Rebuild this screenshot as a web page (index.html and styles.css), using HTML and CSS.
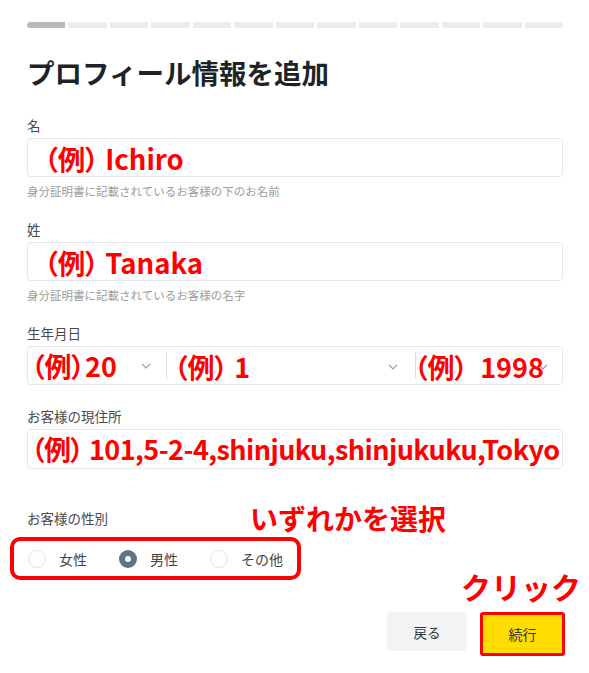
FILE: index.html
```html
<!DOCTYPE html>
<html lang="ja">
<head>
<meta charset="utf-8">
<title>プロフィール情報を追加</title>
<link rel="stylesheet" href="styles.css">
</head>
<body>
<div class="page">
  <div class="progress">
    <span class="seg seg-done"></span><span class="seg"></span><span class="seg"></span><span class="seg"></span><span class="seg"></span><span class="seg"></span><span class="seg"></span><span class="seg"></span><span class="seg"></span><span class="seg"></span><span class="seg"></span><span class="seg"></span><span class="seg"></span>
  </div>

  <h1 class="title">プロフィール情報を追加</h1>

  <div class="field field-first">
    <div class="label">名</div>
    <div class="box"><span class="val val-name">（例） Ichiro</span></div>
    <div class="help">身分証明書に記載されているお客様の下のお名前</div>
  </div>

  <div class="field field-next">
    <div class="label">姓</div>
    <div class="box"><span class="val val-name">（例） Tanaka</span></div>
    <div class="help">身分証明書に記載されているお客様の名字</div>
  </div>

  <div class="field field-next">
    <div class="label">生年月日</div>
    <div class="box box-date">
      <div class="sel sel-day">
        <svg class="chev" width="10" height="6" viewBox="0 0 10 6"><path d="M1 1l4 4 4-4" fill="none" stroke="#9aa0a6" stroke-width="1.2"/></svg>
        <span class="val val-day">（例）20</span>
      </div>
      <div class="sel sel-month">
        <svg class="chev" width="10" height="6" viewBox="0 0 10 6"><path d="M1 1l4 4 4-4" fill="none" stroke="#9aa0a6" stroke-width="1.2"/></svg>
        <span class="val val-month">（例） 1</span>
      </div>
      <div class="sel sel-year">
        <svg class="chev" width="10" height="6" viewBox="0 0 10 6"><path d="M1 1l4 4 4-4" fill="none" stroke="#9aa0a6" stroke-width="1.2"/></svg>
        <span class="val val-year">（例） 1998</span>
      </div>
    </div>
  </div>

  <div class="field field-addr">
    <div class="label">お客様の現住所</div>
    <div class="box box-addr"><span class="val val-addr">（例） 101,5-2-4,shinjuku,shinjukuku,Tokyo</span></div>
  </div>

  <div class="gender">
    <div class="gender-head">
      <div class="label">お客様の性別</div>
      <div class="note note-select">いずれかを選択</div>
    </div>
    <div class="radios">
      <div class="radio"><span class="dot"></span><span class="radio-text">女性</span></div>
      <div class="radio"><span class="dot dot-on"></span><span class="radio-text">男性</span></div>
      <div class="radio"><span class="dot"></span><span class="radio-text">その他</span></div>
    </div>
  </div>

  <div class="actions">
    <div class="note note-click">クリック</div>
    <div class="buttons">
      <div class="btn btn-back">戻る</div>
      <div class="btn btn-next">続行</div>
    </div>
  </div>
</div>
</body>
</html>
```

FILE: styles.css
```css
* { box-sizing: border-box; }
html, body { margin: 0; padding: 0; background: #ffffff; }
body {
  font-family: "Noto Sans CJK JP", "Noto Sans", sans-serif;
  color: #333;
  width: 589px;
  overflow: hidden;
}
.page {
  padding: 22px 26px 0 27px;
}
.progress {
  display: flex;
  gap: 3px;
  height: 6px;
  border-radius: 3px;
  overflow: hidden;
}
.seg { flex: 1; background: #ebecee; }
.seg-done { background: #b9babb; }

.title {
  margin: 27px 0 0;
  font-size: 27.5px;
  line-height: 34px;
  font-weight: 700;
  color: #1d2327;
  letter-spacing: 0;
}

.label {
  font-size: 13.5px;
  line-height: 18px;
  color: #4a4a4a;
}
.field-first { margin-top: 27px; }
.field-next { margin-top: 21px; }
.field-addr { margin-top: 22px; }
.field .label { margin-bottom: 4px; }

.box {
  height: 39px;
  border: 1px solid #e6e7e9;
  border-radius: 4px;
  display: flex;
  align-items: center;
  overflow: visible;
  white-space: nowrap;
}
.box-addr { height: 40px; }
.help {
  margin-top: 6px;
  font-size: 11.5px;
  line-height: 16px;
  color: #9c9c9c;
}
.val {
  color: #ff0000;
  font-weight: 700;
  font-size: 27px;
  line-height: 30px;
  font-feature-settings: "palt" 1;
  white-space: pre;
}
.val-name { margin-left: 16px; font-size: 27.5px; }

.box-date { align-items: stretch; }
.sel {
  display: grid;
  align-items: center;
}
.sel > * { grid-area: 1 / 1; }
.sel .chev { justify-self: end; }
.sel .val { justify-self: start; }
.sel-day { width: 138px; }
.sel-day .chev { margin-right: 15px; }
.val-day { margin-left: 3px; }
.sel-month {
  width: 249px;
  border-left: 1px solid #dcdcdc;
  margin: 5px 0;
}
.sel-month .chev { margin-right: 17px; }
.sel-month .val { margin-left: 7px; }
.sel-year {
  flex: 1;
  border-left: 1px solid #dcdcdc;
  margin: 5px 0;
}
.sel-year .chev { margin-right: 14px; }
.sel-year .val { margin-left: -2px; word-spacing: 6px; }

.val-addr {
  margin-left: 3px;
  letter-spacing: -0.55px;
}

.gender { margin-top: 31px; }
.gender-head {
  display: flex;
  align-items: center;
  height: 36px;
}
.note {
  color: #ff0000;
  font-weight: 700;
  white-space: nowrap;
}
.note-select {
  margin-left: 142px;
  font-size: 28px;
  line-height: 36px;
}
.radios {
  display: inline-flex;
  align-items: center;
  gap: 32px;
  margin-left: -17px;
  margin-top: 1px;
  height: 43px;
  padding: 0 14px;
  border: 4px solid #ff0000;
  border-radius: 10px;
}
.radio {
  display: flex;
  align-items: center;
  gap: 13px;
}
.dot {
  width: 18px;
  height: 18px;
  border-radius: 50%;
  border: 1px solid #e3e4e6;
  background: #fff;
}
.dot-on {
  border: 6px solid #5e7583;
}
.radio-text {
  font-size: 14px;
  line-height: 20px;
  color: #444;
}

.actions {
  display: flex;
  flex-direction: column;
  align-items: flex-end;
  margin-top: -11px;
}
.note-click {
  font-size: 30px;
  line-height: 34px;
  margin-right: -18px;
}
.buttons {
  display: flex;
  align-items: flex-start;
  gap: 13px;
  margin-top: 9px;
  margin-right: -2px;
}
.btn {
  display: flex;
  align-items: center;
  justify-content: center;
  font-size: 13.5px;
  color: #333;
}
.btn-back {
  width: 80px;
  height: 39px;
  background: #f2f3f5;
  border-radius: 4px;
}
.btn-next {
  width: 85px;
  height: 44px;
  background: #ffdd00;
  border: 3px solid #ff0000;
  border-radius: 3px;
  font-size: 14px;
}
```
